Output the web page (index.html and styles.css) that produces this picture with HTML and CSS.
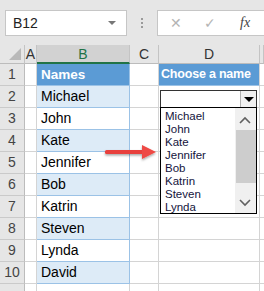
FILE: index.html
```html
<!DOCTYPE html>
<html lang="en">
<head>
    <meta charset="UTF-8">
    <title>Data validation list</title>
    <link rel="stylesheet" href="styles.css">
</head>
<body>
    <div class="toolbar">
        <div class="namebox">
            <span>B12</span>
            <span class="nb-caret"></span>
        </div>
        <div class="grip"><i></i><i></i><i></i></div>
        <div class="formula">
            <span class="fbtn cancel">&#x2715;</span>
            <span class="fbtn enter">&#x2713;</span>
            <span class="fx">fx</span>
        </div>
    </div>

    <div class="sheet">
        <!-- column headers -->
        <div class="hd corner"><span class="tri"></span></div>
        <div class="hd">A</div>
        <div class="hd sel">B</div>
        <div class="hd">C</div>
        <div class="hd">D</div>
        <div class="hd"></div>

        <div class="rh">1</div><div class="c"></div><div class="c b title">Names</div><div class="c"></div><div class="c title wide">Choose a name</div><div class="c"></div>
        <div class="rh">2</div><div class="c"></div><div class="c b band">Michael</div><div class="c"></div><div class="c"></div><div class="c"></div>
        <div class="rh">3</div><div class="c"></div><div class="c b">John</div><div class="c"></div><div class="c"></div><div class="c"></div>
        <div class="rh">4</div><div class="c"></div><div class="c b band">Kate</div><div class="c"></div><div class="c"></div><div class="c"></div>
        <div class="rh">5</div><div class="c"></div><div class="c b">Jennifer</div><div class="c"></div><div class="c"></div><div class="c"></div>
        <div class="rh">6</div><div class="c"></div><div class="c b band">Bob</div><div class="c"></div><div class="c"></div><div class="c"></div>
        <div class="rh">7</div><div class="c"></div><div class="c b">Katrin</div><div class="c"></div><div class="c"></div><div class="c"></div>
        <div class="rh">8</div><div class="c"></div><div class="c b band">Steven</div><div class="c"></div><div class="c"></div><div class="c"></div>
        <div class="rh">9</div><div class="c"></div><div class="c b">Lynda</div><div class="c"></div><div class="c"></div><div class="c"></div>
        <div class="rh">10</div><div class="c"></div><div class="c b band">David</div><div class="c"></div><div class="c"></div><div class="c"></div>
        <div class="rh"></div><div class="c"></div><div class="c"></div><div class="c"></div><div class="c"></div><div class="c"></div>
    </div>

    <!-- validation dropdown over D2 -->
    <div class="combo">
        <span class="combo-btn"></span>
    </div>
    <div class="listbox">
        <ul class="items">
            <li>Michael</li>
            <li>John</li>
            <li>Kate</li>
            <li>Jennifer</li>
            <li>Bob</li>
            <li>Katrin</li>
            <li>Steven</li>
            <li>Lynda</li>
        </ul>
        <div class="scroll">
            <svg class="chev up" width="12" height="8" viewBox="0 0 12 8"><path d="M1 7 L6 2 L11 7" fill="none" stroke="#606060" stroke-width="1.6"/></svg>
            <div class="thumb"></div>
            <svg class="chev down" width="12" height="8" viewBox="0 0 12 8"><path d="M1 1 L6 6 L11 1" fill="none" stroke="#606060" stroke-width="1.6"/></svg>
        </div>
    </div>

    <svg class="arrow" width="60" height="20" viewBox="0 0 60 20">
        <defs>
            <filter id="sh" x="-20%" y="-50%" width="140%" height="200%">
                <feDropShadow dx="0" dy="1.5" stdDeviation="1.2" flood-color="#000" flood-opacity="0.35"/>
            </filter>
        </defs>
        <g filter="url(#sh)">
            <rect x="3" y="7" width="40" height="4" rx="1.5" fill="#e8413c"/>
            <path d="M40 2 L54 9 L40 16 Z" fill="#ee4a45"/>
        </g>
    </svg>
</body>
</html>
```

FILE: styles.css
```css
html, body {
    margin: 0;
    padding: 0;
}
body {
    width: 264px;
    height: 291px;
    overflow: hidden;
    position: relative;
    background: #fff;
    font-family: "Liberation Sans", Arial, sans-serif;
}

/* formula bar */
.toolbar {
    height: 45px;
    background: #e6e6e6;
    display: flex;
    align-items: center;
    padding-left: 5px;
    box-sizing: border-box;
}
.namebox {
    width: 122px;
    height: 26px;
    background: #fff;
    border: 1px solid #c6c6c6;
    box-sizing: border-box;
    display: flex;
    align-items: center;
    justify-content: space-between;
    padding: 0 10px 0 7px;
    font-size: 14px;
    color: #222;
}
.nb-caret {
    width: 0;
    height: 0;
    border-left: 4px solid transparent;
    border-right: 4px solid transparent;
    border-top: 4px solid #777;
}
.grip {
    width: 30px;
    display: flex;
    flex-direction: column;
    align-items: center;
    gap: 2px;
}
.grip i {
    width: 2px;
    height: 2px;
    background: #9a9a9a;
}
.formula {
    flex: 1;
    height: 26px;
    background: #fff;
    border: 1px solid #c6c6c6;
    border-right: none;
    box-sizing: border-box;
    display: flex;
    align-items: center;
    padding-left: 12px;
    gap: 22px;
}
.fbtn {
    font-size: 14px;
    color: #b4b4b4;
    width: 12px;
    text-align: center;
}
.fx {
    font-family: "Liberation Serif", serif;
    font-style: italic;
    font-size: 14px;
    color: #444;
    margin-left: 2px;
}

/* grid */
.sheet {
    display: grid;
    grid-template-columns: 25px 12px 93px 29px 101px 4px;
    grid-template-rows: 19px;
    grid-auto-rows: 22px;
    height: 246px;
    overflow: hidden;
}
.sheet > div {
    box-sizing: border-box;
    border-right: 1px solid #d4d4d4;
    border-bottom: 1px solid #d4d4d4;
    white-space: nowrap;
    overflow: hidden;
}
.hd {
    background: #e6e6e6;
    border-right-color: #c4c4c4 !important;
    border-bottom-color: #bcbcbc !important;
    font-size: 14px;
    color: #333;
    text-align: center;
    line-height: 18px;
}
.hd.sel {
    background: #d2d2d2;
    color: #217346;
    border-bottom: 2px solid #217346 !important;
}
.corner {
    position: relative;
}
.tri {
    position: absolute;
    right: 3px;
    bottom: 3px;
    width: 0;
    height: 0;
    border-left: 12px solid transparent;
    border-bottom: 12px solid #b9b9b9;
}
.rh {
    background: #e6e6e6;
    border-right-color: #bcbcbc !important;
    border-bottom-color: #cacaca !important;
    font-size: 14px;
    color: #444;
    text-align: center;
    line-height: 21px;
}
.c {
    font-size: 14px;
    line-height: 21px;
    color: #000;
    padding-left: 4px;
}
.c.b {
    border-bottom-color: #9bc2e6;
    border-right-color: #9bc2e6;
}
.band {
    background: #ddebf7;
}
.title {
    background: #5b9bd5;
    color: #fff;
    font-weight: bold;
    font-size: 13.5px;
    border-bottom-color: #9bc2e6 !important;
}
.title.wide {
    font-size: 12.5px;
    letter-spacing: -0.2px;
    padding-left: 2px;
}

/* data validation dropdown */
.combo {
    position: absolute;
    left: 160px;
    top: 90px;
    width: 97px;
    height: 18px;
    border: 1px solid #333;
    box-sizing: border-box;
    background: #fff;
}
.combo-btn {
    position: absolute;
    right: 0;
    top: 0;
    width: 16px;
    height: 16px;
    background: #f0f0f0;
    border-left: 1px solid #b0b0b0;
    box-sizing: border-box;
}
.combo-btn::after {
    content: "";
    position: absolute;
    left: 3px;
    top: 6px;
    border-left: 5px solid transparent;
    border-right: 5px solid transparent;
    border-top: 5px solid #000;
}
.listbox {
    position: absolute;
    left: 160px;
    top: 107px;
    width: 97px;
    height: 107px;
    border: 1px solid #000;
    box-sizing: border-box;
    background: #fff;
    display: flex;
}
.items {
    list-style: none;
    margin: 0;
    padding: 2px 0 0 4px;
    flex: 1;
    font-size: 11.5px;
    line-height: 13px;
    color: #14143c;
}
.scroll {
    width: 21px;
    background: #f0f0f0;
    position: relative;
}
.thumb {
    position: absolute;
    left: 1px;
    right: 0;
    top: 22px;
    height: 53px;
    background: #cdcdcd;
}
.chev {
    position: absolute;
    left: 4px;
}
.chev.up {
    top: 8px;
}
.chev.down {
    bottom: 6px;
}

.arrow {
    position: absolute;
    left: 102px;
    top: 143px;
}
```
